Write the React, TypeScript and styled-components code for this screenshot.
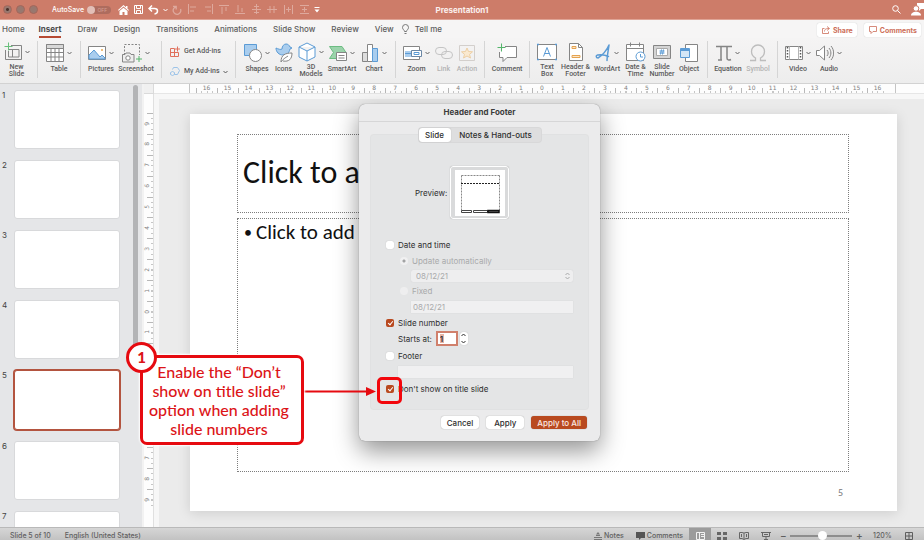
import React from 'react';
import styled, { createGlobalStyle, css } from 'styled-components';

const GlobalStyle = createGlobalStyle`
  *, *::before, *::after { box-sizing: border-box; }
  html, body, #root { height: 100%; }
  body { margin: 0; overflow: hidden; font-family: Inter, "Liberation Sans", sans-serif; font-size: 8px; color: #333; }
  button, input, select { font: inherit; color: inherit; margin: 0; padding: 0; border: 0; background: none; }
  svg { display: block; flex: none; }
`;

const Window = styled.div`
  position: relative;
  display: flex;
  flex-direction: column;
  height: 100vh;
  background: #ebebeb;
  overflow: hidden;
`;

/* ---------- title bar ---------- */

const TitleBar = styled.header`
  display: grid;
  grid-template-columns: 1fr auto 1fr;
  align-items: center;
  height: 20px;
  flex: none;
  background: #cd7c69;
  border-bottom: 1px solid #dfa496;
  color: #fff;
`;
const QuickBar = styled.div`
  display: flex;
  align-items: center;
  padding-left: 3px;
`;
const Lights = styled.div`
  display: flex;
  gap: 4px;
  margin-right: 14px;
`;
const Light = styled.button<{ $dot?: boolean }>`
  width: 9px;
  height: 9px;
  border-radius: 50%;
  background: ${p => (p.$dot ? 'radial-gradient(circle, #4d332d 0 1px, #98786f 2px)' : '#98786f')};
  border: 1px solid #a5665a;
`;
const AutoSave = styled.label`
  display: flex;
  align-items: center;
  gap: 3px;
  font-size: 7px;
  font-weight: 500;
  line-height: 10px;
  margin-right: 4px;
`;
const Toggle = styled.span`
  position: relative;
  display: flex;
  align-items: center;
  justify-content: flex-end;
  width: 24px;
  height: 8px;
  padding-right: 4px;
  border-radius: 4px;
  background: #ae6c5e;
  color: #d39d91;
  font-size: 5px;
  line-height: 8px;
  input { position: absolute; inset: 0; width: 100%; height: 100%; opacity: 0; }
  &::before {
    content: "";
    position: absolute;
    left: 0;
    width: 8px;
    height: 8px;
    border-radius: 50%;
    background: #e3bfb7;
  }
`;
const BarButton = styled.button<{ $w?: number; $dim?: boolean }>`
  display: flex;
  justify-content: center;
  width: ${p => p.$w ?? 16}px;
  color: ${p => (p.$dim ? '#dea99d' : '#fff')};
`;
const DocTitle = styled.h1`
  margin: 0;
  font-size: 8px;
  font-weight: 700;
  line-height: 12px;
  color: #fbf0ee;
`;
const BarEnd = styled.div`
  display: flex;
  justify-content: flex-end;
  align-items: center;
  gap: 10px;
`;

/* ---------- ribbon ---------- */

const TabRow = styled.nav`
  display: flex;
  align-items: center;
  gap: 16px;
  height: 18px;
  flex: none;
  padding: 0 3px 0 2px;
  background: #f6f5f5;
`;
const Tab = styled.button<{ $on?: boolean }>`
  position: relative;
  height: 17px;
  line-height: 17px;
  font-weight: ${p => (p.$on ? 700 : 500)};
  color: ${p => (p.$on ? '#4a4a4a' : '#5d5d5d')};
  white-space: nowrap;
  &:first-child { margin-right: -2px; }
  ${p => p.$on && css`
    &::after {
      content: "";
      position: absolute;
      left: 0;
      right: 0;
      bottom: 0;
      height: 2px;
      background: #b74a33;
    }
  `}
`;
const TellMe = styled(Tab)`
  display: flex;
  align-items: center;
  gap: 6px;
  margin-left: -8px;
`;
const ShareGroup = styled.div`
  display: flex;
  gap: 7px;
  margin-left: auto;
  padding-top: 2px;
`;
const ShareButton = styled.button`
  display: flex;
  align-items: center;
  gap: 3px;
  height: 14px;
  padding: 0 4px 0 5px;
  border-radius: 2px;
  background: #fff;
  box-shadow: 0 0 1px #bbb;
  color: #cd6f5a;
  font-size: 7px;
  font-weight: 700;
`;
const Ribbon = styled.div`
  display: flex;
  height: 46px;
  flex: none;
  padding: 3px 0 5px;
  background: linear-gradient(#f5f4f4, #ededed);
  border-bottom: 1px solid #d2d2d2;
`;
const Group = styled.div<{ $l?: number; $r?: number; $last?: boolean }>`
  display: flex;
  flex: none;
  padding: 0 ${p => p.$r ?? 0}px 0 ${p => p.$l ?? 0}px;
  border-right: ${p => (p.$last ? 0 : 1)}px solid #d5d5d5;
`;
const Tool = styled.button<{ $w: number; $dim?: boolean }>`
  display: flex;
  flex-direction: column;
  align-items: center;
  width: ${p => p.$w}px;
  font-family: Roboto, "Liberation Sans", sans-serif;
  font-size: 7px;
  font-weight: 500;
  line-height: 7px;
  color: ${p => (p.$dim ? '#b3b3b3' : '#5a5a5a')};
  white-space: pre;
`;
const ToolFace = styled.span`
  display: flex;
  align-items: center;
  gap: 3px;
  height: 24px;
  margin-bottom: 1px;
  color: #666;
`;
const AddIns = styled.div`
  display: flex;
  flex-direction: column;
  justify-content: space-between;
  width: 65px;
  padding: 5px 0 1px;
`;
const AddIn = styled.button`
  display: flex;
  align-items: center;
  gap: 4px;
  font-family: Roboto, "Liberation Sans", sans-serif;
  font-size: 7px;
  font-weight: 500;
  line-height: 11px;
  color: #5a5a5a;
  white-space: nowrap;
`;

/* ---------- work area ---------- */

const Main = styled.main`
  display: flex;
  flex: 1;
  min-height: 0;
`;
const Sidebar = styled.aside`
  display: flex;
  justify-content: space-between;
  width: 144px;
  flex: none;
  padding: 1px 4px 0 2px;
  background: #e5e6e8;
  border-right: 2px solid #f2f2f2;
  overflow: hidden;
`;
const Thumbs = styled.ol`
  display: flex;
  flex-direction: column;
  gap: 11px;
  margin: 0;
  padding: 5px 0 0;
  list-style: none;
`;
const ThumbRow = styled.li`
  display: flex;
  font-size: 8px;
  line-height: 11px;
  color: #444;
`;
const ThumbNo = styled.span`
  width: 12px;
`;
const Thumb = styled.button<{ $on?: boolean }>`
  width: 106px;
  height: ${p => (p.$on ? 60 : 59)}px;
  background: #fff;
  border: 1px solid ${p => (p.$on ? '#b3543f' : '#d8d9db')};
  border-radius: 3px;
  box-shadow: ${p => (p.$on ? '0 0 0 1px #b3543f' : 'none')};
`;
const ScrollThumb = styled.div`
  width: 5px;
  height: 262px;
  border-radius: 3px;
  background: #b3b4b6;
`;
const Stage = styled.section`
  display: grid;
  grid-template-columns: 10px 1fr;
  grid-template-rows: 10px 1fr;
  flex: 1;
  min-width: 0;
`;
const Corner = styled.div`
  background: #f0f0f0;
  border-right: 1px solid #dadada;
  border-bottom: 1px solid #dadada;
`;
const RulerX = styled.div`
  padding: 0 28px 0 35px;
  background: #fdfdfd;
  border-bottom: 1px solid #e6e6e6;
`;
const RulerXScale = styled.div`
  display: flex;
  height: 9px;
  padding: 0 7px 0 6px;
  border: solid #c4c4c4;
  border-width: 0 1px;
`;
const CellX = styled.span`
  flex: 1;
  height: 9px;
  text-align: center;
  font-family: "DejaVu Sans", sans-serif;
  font-size: 6px;
  line-height: 7px;
  color: #808080;
  background:
    linear-gradient(#b8b8b8, #b8b8b8) 0 100% / 1px 5px no-repeat,
    repeating-linear-gradient(90deg, #c6c6c6 0 1px, transparent 1px 25%) 0 100% / 100% 2px no-repeat;
`;
const RulerY = styled.div`
  display: flex;
  flex-direction: column;
  padding: 19px 0 17px;
  background: #fdfdfd;
  border-right: 1px solid #e0e0e0;
`;
const CellY = styled.span`
  flex: 1;
  display: flex;
  align-items: center;
  font-family: "DejaVu Sans", sans-serif;
  font-size: 6px;
  line-height: 6px;
  color: #808080;
  background:
    linear-gradient(#b8b8b8, #b8b8b8) 100% 0 / 6px 1px no-repeat,
    repeating-linear-gradient(180deg, #c6c6c6 0 1px, transparent 1px 25%) 100% 0 / 2px 100% no-repeat;
  span { writing-mode: vertical-rl; transform: rotate(180deg); }
`;
const Canvas = styled.div`
  display: flex;
  padding: 15px 27px 16px 31px;
  border: solid #f7f7f7;
  border-width: 5px 0 0 5px;
  background: #ebebeb;
`;
const Slide = styled.article`
  display: flex;
  flex-direction: column;
  flex: 1;
  padding: 20px 48px 0 47px;
  background: #fff;
  box-shadow: 0 2px 12px rgba(0, 0, 0, 0.13);
  font-family: Carlito, Lato, "Open Sans", sans-serif;
  color: #111;
`;
const placeholder = css`
  margin: 0;
  border: 1px dotted #7d7d7d;
  white-space: nowrap;
  overflow: hidden;
`;
const SlideTitle = styled.h2`
  ${placeholder}
  height: 79px;
  padding: 0 5px;
  font-size: 32px;
  font-weight: 400;
  line-height: 76px;
`;
const SlideBody = styled.ul`
  ${placeholder}
  flex: 1;
  margin-top: 5px;
  padding: 3px 6px;
  list-style: none;
  font-size: 21px;
  line-height: 21px;
  li { display: flex; }
  li::before { content: "•"; width: 12px; font-size: 16px; }
`;
const SlideNo = styled.footer`
  height: 39px;
  padding: 15px 6px 0 0;
  text-align: right;
  font-size: 10px;
  line-height: 12px;
  color: #777;
`;

/* ---------- status bar ---------- */

const StatusBar = styled.footer`
  display: flex;
  align-items: flex-end;
  height: 13px;
  flex: none;
  padding: 0 11px 0 10px;
  background: linear-gradient(#d6d6d6, #c2c2c2);
  border-top: 1px solid #b9b9b9;
  font-size: 7px;
  font-weight: 500;
  line-height: 9px;
  color: #5f5f5f;
`;
const StatusText = styled.span`
  margin-right: 14px;
`;
const StatusTools = styled.div`
  display: flex;
  align-items: flex-end;
  margin-left: auto;
`;
const StatusButton = styled.button<{ $gap: number }>`
  display: flex;
  align-items: center;
  gap: 2px;
  height: 9px;
  margin-right: ${p => p.$gap}px;
`;
const ViewButton = styled.button<{ $on?: boolean }>`
  display: flex;
  align-items: center;
  justify-content: center;
  width: 22px;
  height: 12px;
  padding-top: 3px;
  background: ${p => (p.$on ? '#9c9c9c' : 'none')};
  color: ${p => (p.$on ? '#f2f2f2' : '#666')};
`;
const Zoom = styled.label`
  display: flex;
  align-items: center;
  gap: 4px;
  height: 9px;
  margin: 0 11px 0 3px;
`;
const ZoomButton = styled.button`
  width: 6px;
  font-size: 10px;
  line-height: 9px;
`;
const ZoomRange = styled.input`
  appearance: none;
  width: 62px;
  height: 9px;
  background: linear-gradient(#8d8d8d, #8d8d8d) center / 100% 2px no-repeat;
  &::-webkit-slider-thumb {
    appearance: none;
    width: 9px;
    height: 9px;
    border-radius: 50%;
    background: #fff;
  }
`;
const Percent = styled.output`
  width: 32px;
`;

/* ---------- dialog ---------- */

const Dialog = styled.section`
  position: absolute;
  left: 359px;
  top: 104px;
  width: 241px;
  padding-bottom: 12px;
  border-radius: 6px;
  background: #ebebec;
  box-shadow: 0 0 1px rgba(0, 0, 0, 0.5), 0 10px 24px rgba(0, 0, 0, 0.42);
  line-height: 12px;
  color: #2e2e2e;
`;
const DialogTitle = styled.h2`
  margin: 0;
  height: 18px;
  border-bottom: 1px solid #d6d6d7;
  text-align: center;
  font-size: 8px;
  font-weight: 700;
  line-height: 17px;
  color: #3c3c3c;
`;
const Segments = styled.div`
  position: relative;
  display: flex;
  width: 122px;
  height: 14px;
  margin: 6px auto -7px;
  border-radius: 3px;
  background: #dededf;
  box-shadow: 0 0 0 1px #d8d8d9;
`;
const Segment = styled.button<{ $on?: boolean }>`
  flex: ${p => (p.$on ? '0 0 32px' : '1')};
  border-radius: 3px;
  font-weight: 500;
  background: ${p => (p.$on ? '#fff' : 'none')};
  box-shadow: ${p => (p.$on ? '0 0 1px #999' : 'none')};
  white-space: nowrap;
`;
const Panel = styled.form`
  height: 274px;
  margin: 0 12px;
  padding: 31px 15px 0;
  border-radius: 3px;
  background: #e4e5e6;
  box-shadow: 0 0 0 1px #e0e1e2;
`;
const PreviewRow = styled.div`
  display: flex;
  align-items: center;
  gap: 3px;
  height: 53px;
  margin: 0 0 18px 29px;
`;
const PreviewFrame = styled.div`
  display: flex;
  justify-content: center;
  align-items: center;
  width: 59px;
  height: 53px;
  border: 1px solid #fff;
  border-radius: 3px;
  background: #d9dadb;
  box-shadow: 0 0 1px #999;
`;
const Row = styled.div<{ $in?: number; $h?: number; $dim?: boolean }>`
  display: flex;
  align-items: center;
  gap: 4px;
  height: ${p => p.$h ?? 16}px;
  padding-left: ${p => p.$in ?? 0}px;
  color: ${p => (p.$dim ? '#a9aaab' : '#2e2e2e')};
`;
const Check = styled.input`
  appearance: none;
  position: relative;
  width: 8px;
  height: 8px;
  border-radius: 2px;
  background: #fff;
  box-shadow: 0 0 1px #aaa;
  &:checked { background: #b9491f; box-shadow: none; }
  &:checked::before {
    content: "";
    position: absolute;
    left: 3px;
    top: 1px;
    width: 3px;
    height: 5px;
    border: solid #fff;
    border-width: 0 1px 1px 0;
    transform: rotate(40deg);
  }
`;
const Radio = styled.input`
  appearance: none;
  width: 8px;
  height: 8px;
  border-radius: 50%;
  background: #eeeeef;
  &:checked { background: radial-gradient(circle, #a2a3a4 0 1px, #f0f0f1 2px); }
`;
const Drop = styled.div`
  display: flex;
  align-items: center;
  width: 162px;
  height: 12px;
  padding: 0 3px 0 0;
  border-radius: 2px;
  background: #eeeeef;
  box-shadow: 0 0 1px #c9c9ca;
`;
const Select = styled.select`
  appearance: none;
  flex: 1;
  height: 12px;
  padding-left: 5px;
  line-height: 12px;
  &:disabled { opacity: 1; color: #a9aaab; }
`;
const Field = styled.input<{ $w: number }>`
  width: ${p => p.$w}px;
  height: 12px;
  padding: 0 2px;
  background: #f0f0f1;
  box-shadow: 0 0 1px #cfcfd0;
  &:disabled { color: #a9aaab; }
`;
const NumberField = styled.input`
  width: 22px;
  height: 15px;
  padding: 0 2px;
  border: 2px solid #d0806c;
  background: linear-gradient(#e5b4a6, #e5b4a6) 2px 50% / 4px 9px no-repeat #fff;
  font-weight: 600;
`;
const Stepper = styled.div`
  display: flex;
  flex-direction: column;
  width: 8px;
  height: 13px;
  border-radius: 3px;
  background: #fff;
  box-shadow: 0 0 1px #aaa;
  margin-left: -2px;
`;
const Step = styled.button`
  display: flex;
  align-items: center;
  justify-content: center;
  flex: 1;
`;
const Actions = styled.div`
  display: flex;
  justify-content: flex-end;
  gap: 7px;
  padding: 7px 13px 0 0;
`;
const Action = styled.button<{ $primary?: boolean }>`
  min-width: 38px;
  height: 13px;
  padding: 0 6px;
  border-radius: 3px;
  background: ${p => (p.$primary ? '#b94a20' : '#fff')};
  color: ${p => (p.$primary ? '#fbe9e3' : '#2e2e2e')};
  box-shadow: 0 0 1px #888;
  font-weight: 500;
  white-space: nowrap;
`;

/* ---------- annotation ---------- */

const Callout = styled.aside`
  position: absolute;
  left: 140px;
  top: 355px;
  width: 164px;
  padding: 4px 6px 4px 0;
  border: 3px solid #e60a10;
  border-radius: 7px;
  background: #fff;
  box-shadow: 0 0 2px 1px #fff;
  text-align: center;
  font-family: Lato, sans-serif;
  font-size: 16px;
  font-weight: 500;
  line-height: 19px;
  color: #dc1418;
  white-space: pre;
`;
const Badge = styled.span`
  position: absolute;
  left: -17px;
  top: -16px;
  width: 31px;
  height: 31px;
  border: 3px solid #e60a10;
  border-radius: 50%;
  background: #fff;
  font-size: 15px;
  font-weight: 900;
  line-height: 25px;
`;
const Arrow = styled.svg`
  position: absolute;
  left: 303px;
  top: 386px;
`;
const Highlight = styled.div`
  position: absolute;
  left: 377px;
  top: 377px;
  width: 25px;
  height: 27px;
  border: 3px solid #f2060c;
  border-radius: 5px;
`;

/* ---------- icons ---------- */

const Chevron = () => (
  <svg width="5" height="4" viewBox="0 0 5 4" fill="none" stroke="currentColor"><path d="M.5 1l2 2 2-2" /></svg>
);

type IconProps = { children: React.ReactNode; w?: number; h?: number; color?: string; line?: number };
const Icon = ({ children, w = 20, h = 20, color = 'currentColor', line = 1 }: IconProps) => (
  <svg width={w} height={h} viewBox={`0 0 ${w} ${h}`} fill="none" stroke={color} strokeWidth={line}>{children}</svg>
);

const BLUE = '#5b9bd5';
const PALE = '#a9cdee';
const GRAY = '#858585';

const icons = {
  newSlide: <Icon w={18} color={GRAY}><path d="M7 3.500h10.500v14H1.500V8M4 7.500h11M4.500 9v6h10.500V7.500M8.500 7.500v7.500" /><path d="M4.500.500v8M.5 4.500h8" stroke="#69c07c" /></Icon>,
  table: <Icon w={18} color={GRAY}><path fill="#fff" d="M.5 1.500h17v17H.5z" /><path fill="#d8d8d8" d="M.5 1.500h17v4H.5z" /><path d="M.5 9.500h17M.5 14h17M5 5.500v13M9 5.500v13M13 5.500v13" /></Icon>,
  pictures: <Icon w={18} color={GRAY}><path fill="#fff" d="M.5 3.500h17v13H.5z" /><path d="M1 16V12l5-5 6 7 2-2 3 3v1z" fill={PALE} stroke={BLUE} /><circle cx="14" cy="7" r="1" fill="#eaa94e" stroke="none" /></Icon>,
  screenshot: <Icon w={20} color={GRAY}><path strokeDasharray="2 1.500" d="M2.500 12V1.500h15V12" /><path fill="#eee" d="M.5 11.500H3l1-1.500h4l1 1.500h3v7.500H.5z" /><circle cx="6" cy="15" r="2.200" fill="#fff" /><path d="M17 13v6M14 16h6" stroke="#55b56b" /></Icon>,
  shapes: <Icon w={18}><path fill={PALE} stroke={BLUE} d="M.5 1.500h12v11H.5z" /><circle cx="11.500" cy="12.500" r="6" fill="#fff" stroke={GRAY} /></Icon>,
  icons: <Icon w={18}><path fill={PALE} stroke={BLUE} d="M1 5c2 1 5 2 6 1 0-3 2-5 4-5 2 0 3 1 4 3l2 1-2 1c-1 4-3 6-7 6-4 0-7-3-7-7z" /><path fill="#fff" stroke={GRAY} d="M6 19c0-7 4-9 11-9 0 6-3 9-9 8M6 19c2-3 4-4 7-6" /></Icon>,
  model: <Icon w={18} color={BLUE}><path fill="#fff" d="M9 1l8 4v10l-8 4-8-4V5zM1 5l8 4 8-4M9 9v10" /></Icon>,
  smartArt: <Icon w={18}><path fill="#9bd3ab" stroke="#6cbc82" d="M.5 3.500H13l4 6-4 6H.5l4-6z" /><path fill="#fff" stroke={GRAY} d="M7.500 9.500h10v8h-10zM9.500 12.500h6M9.500 15h6" /></Icon>,
  chart: <Icon w={18}><path fill="#ddd" stroke={GRAY} d="M1.500 9.500h5v9h-5z" /><path fill="#fff" stroke={GRAY} d="M6.500 1.500h5v17h-5z" /><path fill={PALE} stroke={BLUE} d="M11.500 5.500h5v13h-5z" /></Icon>,
  zoom: <Icon w={19} color={GRAY}><path fill="#fff" d="M.5 3.500h16v13H.5z" /><path fill={PALE} stroke="none" d="M2 8h8v6H2z" /><path d="M2 10.500h7" stroke={BLUE} /><path fill="#fff" stroke="#6a87a5" d="M8.500 7.500h10v6h-10z" /><path d="M11 9.500h5v2h-5z" stroke={BLUE} /></Icon>,
  link: <Icon w={18} color="#c4c4c4"><rect x=".5" y="4.500" width="11" height="7" rx="3.500" /><rect x="6.500" y="8.500" width="11" height="7" rx="3.500" /></Icon>,
  action: <Icon w={17} color="#d3cfcc"><path d="M.5 2.500h15v15H.5z" /><path stroke="#edcfa4" fill="#fae9cf" d="M8 5l1.500 3.500 4 .3-3 2.600 1 3.600L8 13l-3.500 2 1-3.600-3-2.600 4-.3z" /></Icon>,
  comment: <Icon w={20} color={GRAY}><path fill="#fff" d="M8 3.500h11.500v11H10l-4 4v-4H2.500V9" /><path d="M4.500.500v8M.5 4.500h8" stroke="#55b56b" /></Icon>,
  textBox: <Icon w={20}><path fill="#fff" stroke={GRAY} d="M.5 2.500h19v15H.5z" /><path stroke={BLUE} d="M6.500 14.500L10 5.500l3.500 9M7.500 11.500h5" /><path stroke={BLUE} strokeWidth="1.500" d="M0 2.500h2M18 2.500h2M0 17.500h2M18 17.500h2" /></Icon>,
  headerFooter: <Icon w={14}><path fill="#fff" stroke={GRAY} d="M.5 1.500h9l4 4v13H.5z" /><path stroke={GRAY} d="M9.500 1.500v4h4" /><path stroke="#e5a350" fill="#fce6c8" d="M3 4.500h4v2H3zM3 13.500h8v2H3z" /></Icon>,
  wordArt: <Icon w={16} color={BLUE}><path strokeWidth="1.500" strokeLinejoin="round" strokeLinecap="round" d="M3 15C1 15 .5 12.500 2.500 12c4-.5 9 .5 11 1.500M3 15C7 13 12 7 14 2c-.5 5-2 10-2 15.500" /></Icon>,
  date: <Icon w={20} color={GRAY}><path fill="#fff" d="M.5 2.500h17v16H.5z" /><path d="M.5 6.500h17M4.500.5v4M13.500.5v4" /><circle cx="14.500" cy="14.500" r="4.500" fill="#fff" stroke={BLUE} /><path d="M14.500 12v3h2.500" stroke={BLUE} /></Icon>,
  slideNo: <Icon w={18} color={GRAY}><path fill="#d4d4d4" d="M.5 3.500h17v13H.5z" /><path fill="#fff" stroke="#aaa" d="M3.500 6.500h11v7h-11z" /><path stroke={BLUE} d="M8.500 7.500l-1 5M10.500 7.500l-1 5M6.500 9h5M6.500 11h5" /></Icon>,
  object: <Icon w={18} color={GRAY}><path fill="#fff" d="M5.500 1.500h12v17h-12z" /><path fill="#fff" stroke={BLUE} d="M.5 5.500h9v9h-9z" /><path stroke={BLUE} strokeWidth="2" d="M1 7h8" /><path fill={PALE} stroke="none" d="M1 8h8v6H1z" opacity=".5" /></Icon>,
  equation: <Icon w={16} color={GRAY} line={2}><path d="M0 3.500h16M5 3v14M11 3v12c0 2 2 2.500 4 1.500M2 17h4" strokeWidth="1.500" /></Icon>,
  symbol: <Icon w={16} color="#bdbdbd" line={1}><path strokeWidth="1.300" d="M0 17.500h5.500V15C2 13 1.500 10 1.500 8.500 1.500 5 4 2 8 2s6.500 3 6.500 6.500c0 1.500-.5 4.500-4 6.500v2.500H16" /></Icon>,
  video: <Icon w={18} color={GRAY}><path fill="#fff" d="M.5 3.500h17v13H.5z" /><path d="M4.500 3.500v13M13.500 3.500v13" stroke="#b5b5b5" /><path strokeDasharray="1.500 1.500" strokeWidth="1.500" d="M2.500 4v12M15.500 4v12" stroke="#555" /></Icon>,
  audio: <Icon w={18} color={GRAY}><path fill="#fff" d="M.5 7.500h3l5-4.500v14l-5-4.500h-3z" /><path d="M11 7c1.500 2 1.500 4 0 6M13 5c2.500 3 2.500 7 0 10M15 3c3.500 4 3.500 10 0 14" /></Icon>,
};

type ToolDef = { icon: keyof typeof icons; label: string; w: number; menu?: boolean; dim?: boolean };
const toolGroups: { l?: number; r?: number; tools: ToolDef[] }[] = [
  { r: 4, tools: [{ icon: 'newSlide', label: 'New\nSlide', w: 33, menu: true }] },
  { tools: [{ icon: 'table', label: 'Table', w: 42, menu: true }] },
  { r: 10, tools: [{ icon: 'pictures', label: 'Pictures', w: 40, menu: true }, { icon: 'screenshot', label: 'Screenshot', w: 30, menu: true }] },
  {
    l: 6, r: 4, tools: [
      { icon: 'shapes', label: 'Shapes', w: 30, menu: true },
      { icon: 'icons', label: 'Icons', w: 23 },
      { icon: 'model', label: '3D\nModels', w: 32, menu: true },
      { icon: 'smartArt', label: 'SmartArt', w: 30, menu: true },
      { icon: 'chart', label: 'Chart', w: 34, menu: true },
    ],
  },
  {
    l: 6, r: 6, tools: [
      { icon: 'zoom', label: 'Zoom', w: 29, menu: true },
      { icon: 'link', label: 'Link', w: 25, dim: true },
      { icon: 'action', label: 'Action', w: 22, dim: true },
    ],
  },
  { tools: [{ icon: 'comment', label: 'Comment', w: 44 }] },
  {
    l: 4, r: 5, tools: [
      { icon: 'textBox', label: 'Text\nBox', w: 26 },
      { icon: 'headerFooter', label: 'Header &\nFooter', w: 31 },
      { icon: 'wordArt', label: 'WordArt', w: 32, menu: true },
      { icon: 'date', label: 'Date &\nTime', w: 25 },
      { icon: 'slideNo', label: 'Slide\nNumber', w: 28 },
      { icon: 'object', label: 'Object', w: 26 },
    ],
  },
  { l: 5, r: 4, tools: [{ icon: 'equation', label: 'Equation', w: 30, menu: true }, { icon: 'symbol', label: 'Symbol', w: 30, dim: true }] },
  { l: 5, tools: [{ icon: 'video', label: 'Video', w: 30, menu: true }, { icon: 'audio', label: 'Audio', w: 32, menu: true }] },
];

const alignIcons: [string, string][] = [
  ['Align left', 'M1.500 0v10M3 3h6M3 7h4'],
  ['Align right', 'M9.500 0v10M2 3h6M4 7h4'],
  ['Align top', 'M0 1.500h10M3 3v7M7 3v4'],
  ['Align bottom', 'M0 9.500h10M3 1v7M7 4v4'],
  ['Align middle', 'M1 5.500h9M3 2.500h5M3 8.500h5M5.500 0v10'],
  ['Align center', 'M0 5.500h10M3 2v7M7 2v7'],
  ['Distribute horizontally', 'M1.500 1v9M5.500 3v5M9.500 1v9M3 5.500h5'],
  ['Distribute vertically', 'M1 1.500h9M3 5.500h5M1 9.500h9M5.500 3v5'],
];

const tabs = ['Home', 'Insert', 'Draw', 'Design', 'Transitions', 'Animations', 'Slide Show', 'Review', 'View'];
const slides = [1, 2, 3, 4, 5, 6, 7];
const scale = (n: number) => Array.from({ length: n * 2 + 1 }, (_, i) => Math.abs(i - n));

const renderGroup = (g: (typeof toolGroups)[number], last = false) => (
  <Group key={g.tools[0].label} $l={g.l} $r={g.r} $last={last}>
    {g.tools.map(t => (
      <Tool key={t.label} $w={t.w} $dim={t.dim} disabled={t.dim}>
        <ToolFace>{icons[t.icon]}{t.menu && <Chevron />}</ToolFace>
        {t.label}
      </Tool>
    ))}
  </Group>
);

const PreviewArt = () => (
  <svg width="50" height="46" viewBox="0 0 50 46" fill="none">
    <path fill="#fff" d="M0 0h50v46H0z" />
    <path stroke="#888" strokeDasharray="2 1" d="M6.500 5.500h38M6.500 5.500v36M44.500 5.500v36" />
    <path stroke="#222" strokeDasharray="2 1" d="M6 13.500h39" />
    <path stroke="#444" fill="#fff" d="M6.500 40.500h10v2h-10zM18.500 40.500h14v2h-14z" />
    <path stroke="#111" fill="#777" strokeWidth="1.500" d="M33 40.500h11v2H33z" />
  </svg>
);

export default function App() {
  return (
    <Window>
      <GlobalStyle />
      <TitleBar>
        <QuickBar>
          <Lights>
            <Light $dot aria-label="Close" />
            <Light aria-label="Minimize" />
            <Light aria-label="Full screen" />
          </Lights>
          <AutoSave>
            AutoSave
            <Toggle><input type="checkbox" />OFF</Toggle>
          </AutoSave>
          <BarButton aria-label="Home">
            <svg width="11" height="10" viewBox="0 0 11 10" fill="currentColor"><path d="M5.500 0L8 2.300V1h1.500v2.700L11 5l-.7.800L5.500 1.600.7 5.800 0 5z" /><path d="M5.500 2.700L9.500 6v4h-3V7h-2v3h-3V6z" /></svg>
          </BarButton>
          <BarButton $w={15} aria-label="Save">
            <Icon w={9} h={9}><path d="M.5.500h8v8h-8zM2.500.500v3h4v-3M2.500 8.500v-3h4v3" /></Icon>
          </BarButton>
          <BarButton $w={15} aria-label="Undo">
            <Icon w={11} h={10} line={1.500}><path d="M4 .5L1 3.500l3 3M1 3.500h5.500c4 0 4 5 0 5.500" /></Icon>
          </BarButton>
          <BarButton $w={8} aria-label="Undo list"><Chevron /></BarButton>
          <BarButton $w={15} $dim aria-label="Redo">
            <Icon w={10} h={10} line={1.300}><path d="M4 1.800A3.800 3.800 0 1 0 8.500 4M1 1.300h3.200v3.200" /></Icon>
          </BarButton>
          {alignIcons.map(([name, d]) => (
            <BarButton key={name} $dim aria-label={name}><Icon w={11} h={11}><path d={d} /></Icon></BarButton>
          ))}
          <BarButton $w={10} aria-label="Customize">
            <svg width="6" height="6" viewBox="0 0 6 6" fill="currentColor"><path d="M.5 0h5v1h-5zM.5 2.500h5L3 5.500z" /></svg>
          </BarButton>
        </QuickBar>
        <DocTitle>Presentation1</DocTitle>
        <BarEnd>
          <BarButton $w={10} aria-label="Search">
            <Icon w={9} h={9}><circle cx="3.500" cy="3.500" r="2.800" /><path d="M5.500 5.500l3 3" /></Icon>
          </BarButton>
          <BarButton $w={13} aria-label="Account">
            <svg width="13" height="13" viewBox="0 0 13 13" fill="currentColor"><path d="M6 0h7v6h-3l-2 2V5H6z" /><circle cx="5" cy="5.500" r="2.800" stroke="#cd7c69" /><path d="M0 12.500c0-5 10-5 10 0z" /></svg>
          </BarButton>
        </BarEnd>
      </TitleBar>

      <TabRow>
        {tabs.map(t => <Tab key={t} $on={t === 'Insert'}>{t}</Tab>)}
        <TellMe>
          <Icon w={7} h={11} color="#777"><path d="M2.500 7.500C2.500 6 .5 5.500.5 3.500a3 3 0 0 1 6 0c0 2-2 2.500-2 4zM2.500 9.500h2" /></Icon>
          Tell me
        </TellMe>
        <ShareGroup>
          <ShareButton>
            <Icon w={8} h={8}><path d="M2.500 2.500h-2v5h6v-2M2.500 5.500c0-2 1-3 4.500-3M5 .5l2.500 2L5 4.500" strokeWidth=".8" /></Icon>
            Share
          </ShareButton>
          <ShareButton>
            <Icon w={8} h={8}><path d="M.5.5h7v5H4l-2 2v-2H.5z" strokeWidth=".8" /></Icon>
            Comments
          </ShareButton>
        </ShareGroup>
      </TabRow>

      <Ribbon>
        {toolGroups.slice(0, 3).map(g => renderGroup(g))}
        <Group $l={8}>
          <AddIns>
            <AddIn>
              <Icon w={10} h={11} color="#e0705c"><path d="M.5 2.500h4v4M.5 2.500v8h8v-4h-8M4.500 6.500v4M7.500.5v5M5 3h5" /></Icon>
              Get Add-ins
            </AddIn>
            <AddIn>
              <Icon w={10} h={11} color="#9cc3e8"><path d="M3.500 1.500h4l2 3-2 4h-3M3.500 1.500l-1 2M.5 6.500l2-1 2 1v2l-2 1-2-1z" /></Icon>
              My Add-ins <Chevron />
            </AddIn>
          </AddIns>
        </Group>
        {toolGroups.slice(3).map((g, i, all) => renderGroup(g, i === all.length - 1))}
      </Ribbon>

      <Main>
        <Sidebar>
          <Thumbs>
            {slides.map(n => (
              <ThumbRow key={n}>
                <ThumbNo>{n}</ThumbNo>
                <Thumb $on={n === 5} aria-label={`Slide ${n}`} />
              </ThumbRow>
            ))}
          </Thumbs>
          <ScrollThumb />
        </Sidebar>
        <Stage>
          <Corner />
          <RulerX>
            <RulerXScale>{scale(16).map((n, i) => <CellX key={i}>{n}</CellX>)}</RulerXScale>
          </RulerX>
          <RulerY>{scale(9).map((n, i) => <CellY key={i}><span>{n}</span></CellY>)}</RulerY>
          <Canvas>
            <Slide>
              <SlideTitle>Click to add title</SlideTitle>
              <SlideBody><li>Click to add text</li></SlideBody>
              <SlideNo>5</SlideNo>
            </Slide>
          </Canvas>
        </Stage>
      </Main>

      <StatusBar>
        <StatusText>Slide 5 of 10</StatusText>
        <StatusText>English (United States)</StatusText>
        <StatusTools>
          <StatusButton $gap={12}>
            <Icon w={8} h={8} color="#777"><path d="M0 5.500h8M0 7.500h8M2 3.500h4" /><path d="M4 0l2 2.500H2z" fill="#777" stroke="none" /></Icon>
            Notes
          </StatusButton>
          <StatusButton $gap={6}>
            <svg width="9" height="8" viewBox="0 0 9 8" fill="#555"><path d="M0 0h9v6H5L3 8V6H0z" /></svg>
            Comments
          </StatusButton>
          <ViewButton $on aria-label="Normal view"><Icon w={9} h={8}><path d="M.5.500h8v7h-8zM3.500 0v8M5 2.500h3M5 4.500h3" /></Icon></ViewButton>
          <ViewButton aria-label="Slide sorter"><svg width="10" height="8" viewBox="0 0 10 8" fill="currentColor"><path d="M0 0h4v3H0zM6 0h4v3H6zM0 5h4v3H0zM6 5h4v3H6z" /></svg></ViewButton>
          <ViewButton aria-label="Reading view"><Icon w={10} h={8}><path d="M5 1L3 .5H.5v6H3l2 1 2-1h2.500v-6H7zM5 1v6M2.500 2v3M7.500 2v3" /></Icon></ViewButton>
          <ViewButton aria-label="Slide show"><Icon w={10} h={8}><path d="M0 .5h10M1.500.5v4h7v-4M5 4.500v3M3 7.500h4M3 2.500h4" /></Icon></ViewButton>
          <Zoom>
            <ZoomButton aria-label="Zoom out">−</ZoomButton>
            <ZoomRange type="range" min={0} max={100} defaultValue={53} aria-label="Zoom" />
            <ZoomButton aria-label="Zoom in">+</ZoomButton>
          </Zoom>
          <Percent>120%</Percent>
          <StatusButton $gap={0} aria-label="Fit slide">
            <Icon w={8} h={8}><path d="M.5.500h7v7h-7zM0 4h2M6 4h2M4 0v2M4 6v2M3 3h2v2H3z" /></Icon>
          </StatusButton>
        </StatusTools>
      </StatusBar>

      <Dialog role="dialog" aria-labelledby="hf-title">
        <DialogTitle id="hf-title">Header and Footer</DialogTitle>
        <Segments>
          <Segment $on>Slide</Segment>
          <Segment>Notes &amp; Hand-outs</Segment>
        </Segments>
        <Panel>
          <PreviewRow>
            Preview:
            <PreviewFrame><PreviewArt /></PreviewFrame>
          </PreviewRow>
          <Row><Check type="checkbox" id="date" /><label htmlFor="date">Date and time</label></Row>
          <Row $in={14} $h={15} $dim><Radio type="radio" name="mode" id="auto" defaultChecked disabled /><label htmlFor="auto">Update automatically</label></Row>
          <Row $in={25} $dim $h={15}>
            <Drop>
              <Select aria-label="Date format" disabled><option>08/12/21</option></Select>
              <Icon w={5} h={8}><path d="M.5 3l2-2 2 2M.5 5l2 2 2-2" /></Icon>
            </Drop>
          </Row>
          <Row $in={14} $dim><Radio type="radio" name="mode" id="fixed" disabled /><label htmlFor="fixed">Fixed</label></Row>
          <Row $in={25} $dim $h={15}><Field $w={162} aria-label="Fixed date" defaultValue="08/12/21" disabled /></Row>
          <Row $h={17}><Check type="checkbox" id="num" defaultChecked /><label htmlFor="num">Slide number</label></Row>
          <Row $in={12} $h={15}>
            <label htmlFor="start">Starts at:</label>
            <NumberField id="start" defaultValue="1" />
            <Stepper>
              <Step aria-label="Increase"><Icon w={5} h={4}><path d="M.5 3l2-2 2 2" /></Icon></Step>
              <Step aria-label="Decrease"><Chevron /></Step>
            </Stepper>
          </Row>
          <Row $h={19}><Check type="checkbox" id="foot" /><label htmlFor="foot">Footer</label></Row>
          <Row $in={12} $h={14}><Field $w={175} aria-label="Footer text" /></Row>
          <Row $h={19}><Check type="checkbox" id="hide" defaultChecked /><label htmlFor="hide">Don't show on title slide</label></Row>
        </Panel>
        <Actions>
          <Action>Cancel</Action>
          <Action>Apply</Action>
          <Action $primary>Apply to All</Action>
        </Actions>
      </Dialog>

      <Arrow width="73" height="11" viewBox="0 0 73 11">
        <path d="M0 5.500h64" stroke="#e60a10" strokeWidth="2" />
        <path d="M63 1l10 4.500L63 10z" fill="#e60a10" />
      </Arrow>
      <Highlight />
      <Callout>
        {'Enable the “Don’t\nshow on title slide”\noption when adding\nslide numbers'}
        <Badge>1</Badge>
      </Callout>
    </Window>
  );
}
